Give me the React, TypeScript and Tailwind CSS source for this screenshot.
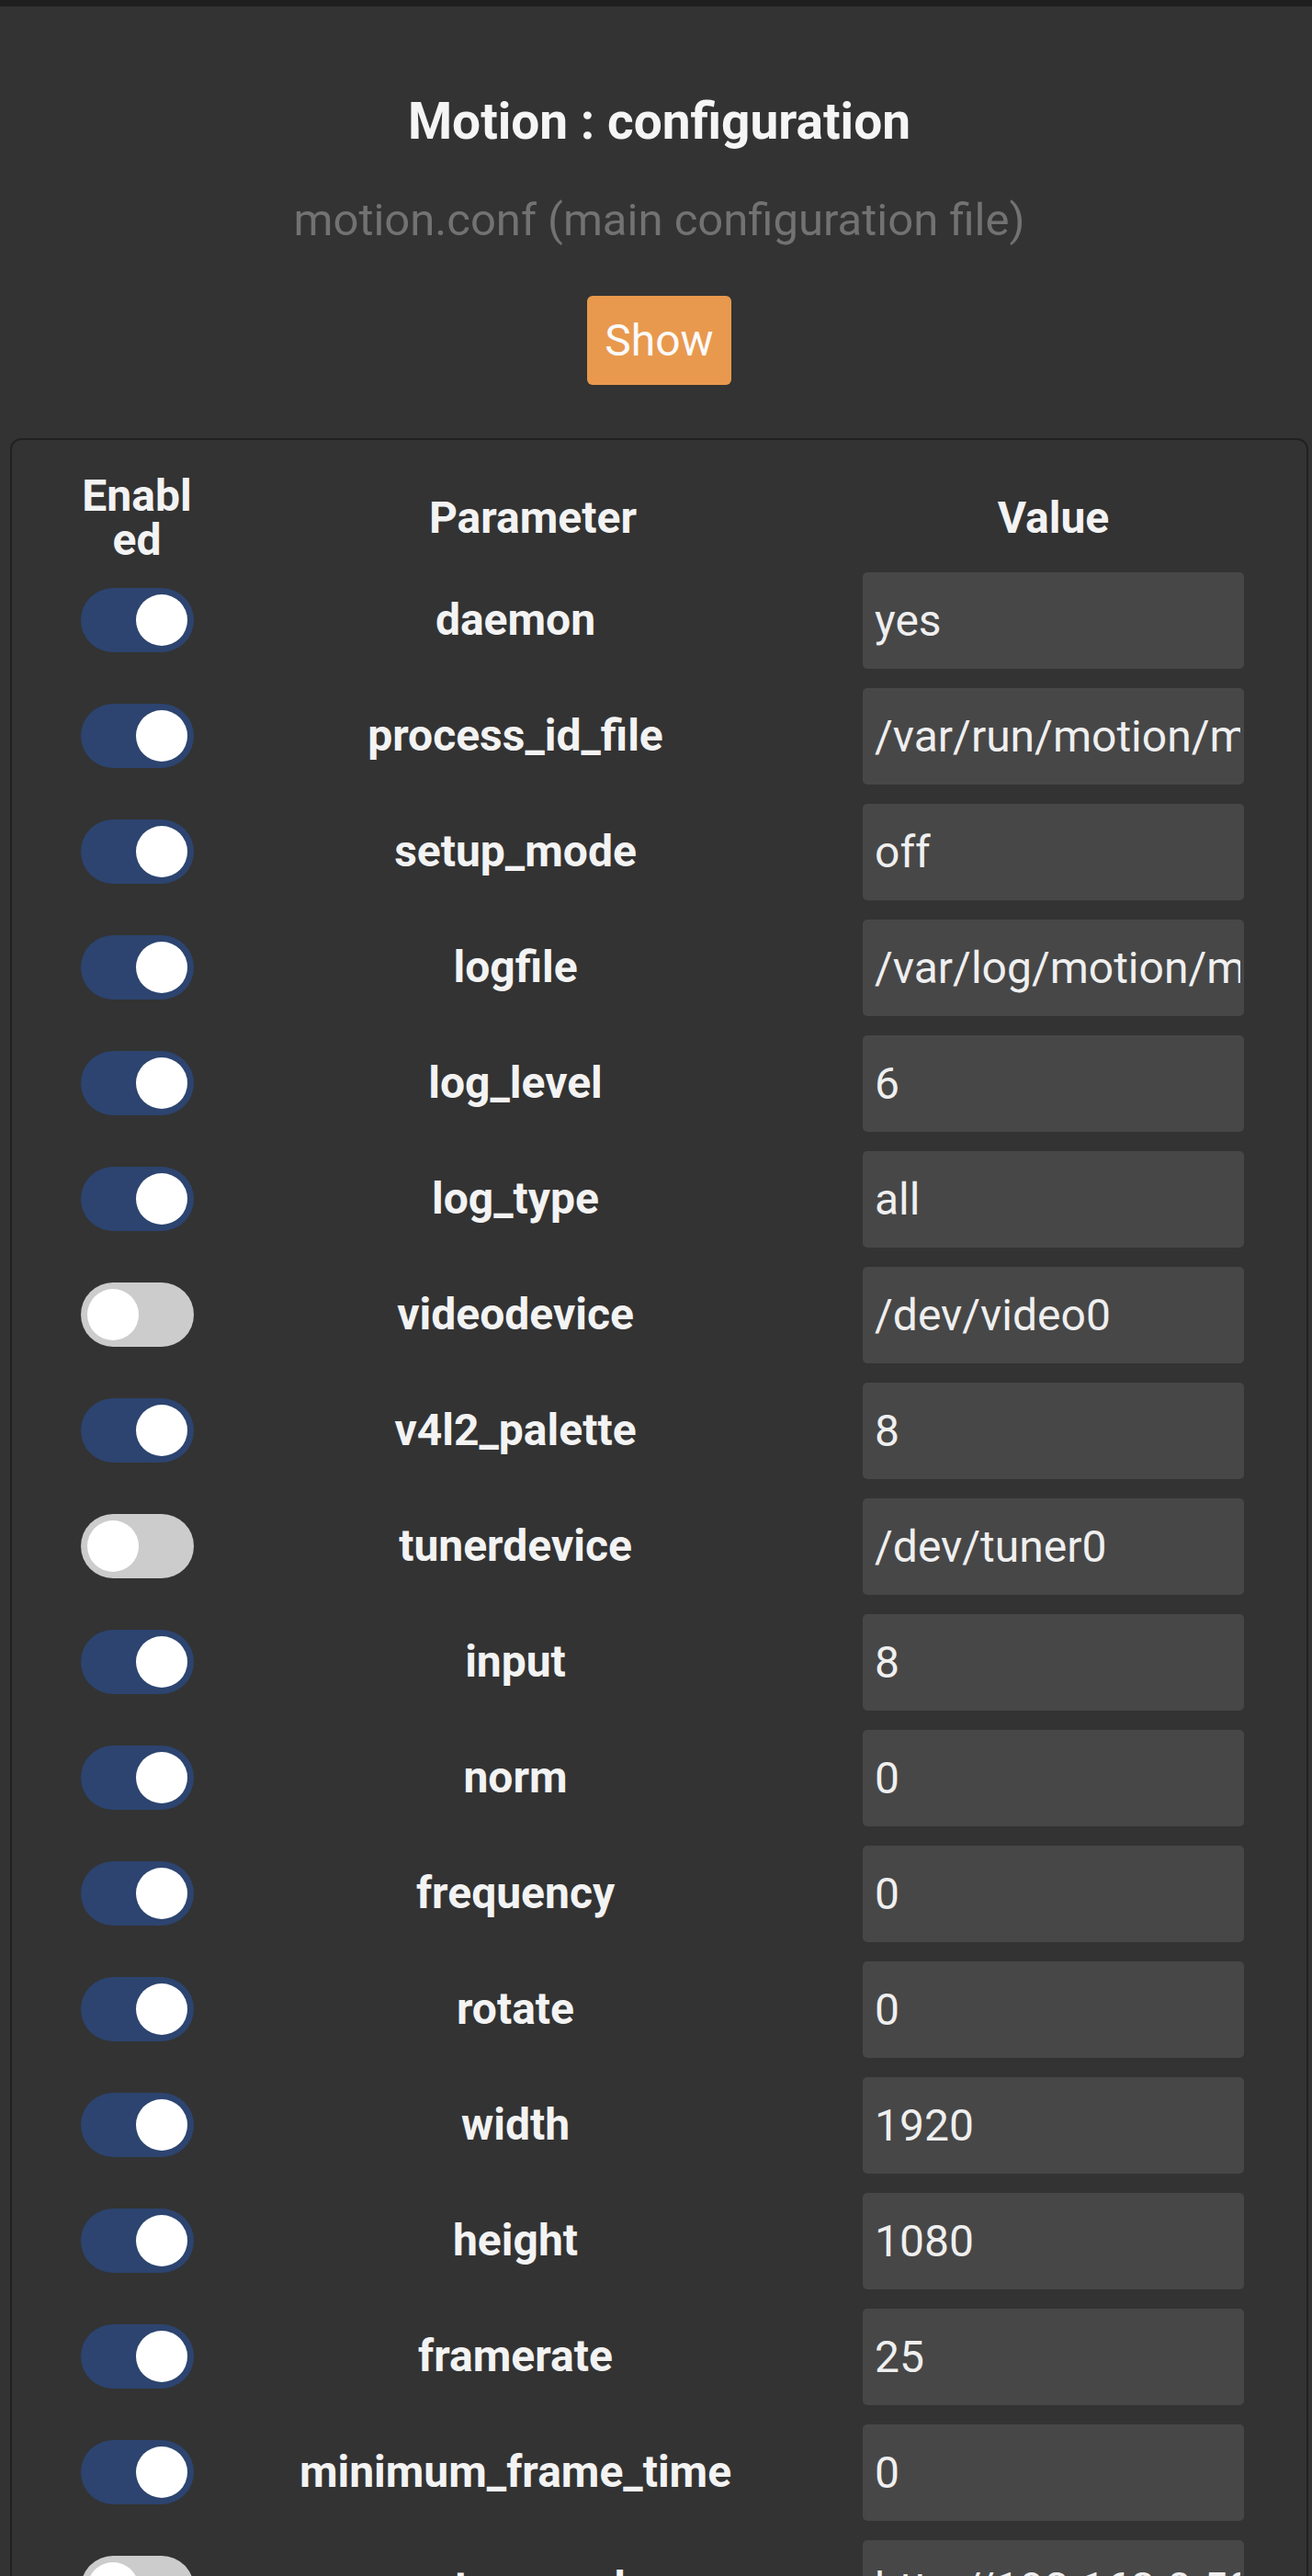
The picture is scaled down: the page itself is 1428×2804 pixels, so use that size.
import React from "react";

type Row = { name: string; value: string; on: boolean };

const rows: Row[] = [
  { name: "daemon", value: "yes", on: true },
  { name: "process_id_file", value: "/var/run/motion/motion.pid", on: true },
  { name: "setup_mode", value: "off", on: true },
  { name: "logfile", value: "/var/log/motion/motion.log", on: true },
  { name: "log_level", value: "6", on: true },
  { name: "log_type", value: "all", on: true },
  { name: "videodevice", value: "/dev/video0", on: false },
  { name: "v4l2_palette", value: "8", on: true },
  { name: "tunerdevice", value: "/dev/tuner0", on: false },
  { name: "input", value: "8", on: true },
  { name: "norm", value: "0", on: true },
  { name: "frequency", value: "0", on: true },
  { name: "rotate", value: "0", on: true },
  { name: "width", value: "1920", on: true },
  { name: "height", value: "1080", on: true },
  { name: "framerate", value: "25", on: true },
  { name: "minimum_frame_time", value: "0", on: true },
  { name: "netcam_url", value: "http://192.168.0.50:8080/video", on: false },
];

function Toggle({ on }: { on: boolean }) {
  return (
    <div
      className={
        on
          ? "flex h-[70px] w-[123px] items-center justify-end rounded-full bg-[#2c446f] px-[7px]"
          : "flex h-[70px] w-[123px] items-center justify-start rounded-full bg-[#cccccc] px-[7px]"
      }
    >
      <div className="h-[56px] w-[56px] rounded-full bg-white" />
    </div>
  );
}

export default function App() {
  return (
    <div className="h-[2804px] overflow-hidden bg-[#333333] font-[Roboto,sans-serif] text-[#f3f3f3]">
      <div className="h-[7px] bg-[#1f1f1f]" />
      <div className="flex flex-col items-center pl-[7px] pt-[92px]">
        <h1 className="text-[55px] font-bold leading-[66px] text-[#f5f5f5]">
          Motion : configuration
        </h1>
        <p className="mt-[47px] text-[49px] leading-[56px] text-[#727272]">
          motion.conf (main configuration file)
        </p>
        <button className="mt-[54px] h-[97px] rounded-[6px] bg-[#e8994e] px-[19px] text-[48px] leading-[56px] text-[#fafafa]">
          Show
        </button>
      </div>
      <div className="ml-[11px] mt-[58px] w-[1413px] rounded-[12px] border-2 border-[#212121] bg-[#333333] pl-[74px] pt-[37px]">
        <div className="grid grid-cols-[124px_700px_443px]">
          <div className="flex h-[96px] items-center justify-center">
            <div className="w-[124px] break-all text-center text-[48px] font-bold leading-[48px]">
              Enabled
            </div>
          </div>
          <div className="flex h-[96px] items-center justify-center pl-[38px] text-[48px] font-bold leading-[48px]">
            Parameter
          </div>
          <div className="flex h-[96px] items-center justify-center pl-[28px] text-[48px] font-bold leading-[48px]">
            Value
          </div>
          {rows.map((r) => (
            <React.Fragment key={r.name}>
              <div className="flex h-[126px] items-center justify-center">
                <Toggle on={r.on} />
              </div>
              <div className="flex h-[126px] items-center justify-center whitespace-nowrap text-[48px] font-bold text-[#f3f3f3]">
                {r.name}
              </div>
              <div className="flex h-[126px] items-center pl-[28px]">
                <input
                  readOnly
                  value={r.value}
                  className="h-[105px] w-[415px] rounded-[5px] bg-[#474747] pl-[13px] pr-[4px] text-[48px] text-[#efefef] outline-none"
                />
              </div>
            </React.Fragment>
          ))}
        </div>
      </div>
    </div>
  );
}
